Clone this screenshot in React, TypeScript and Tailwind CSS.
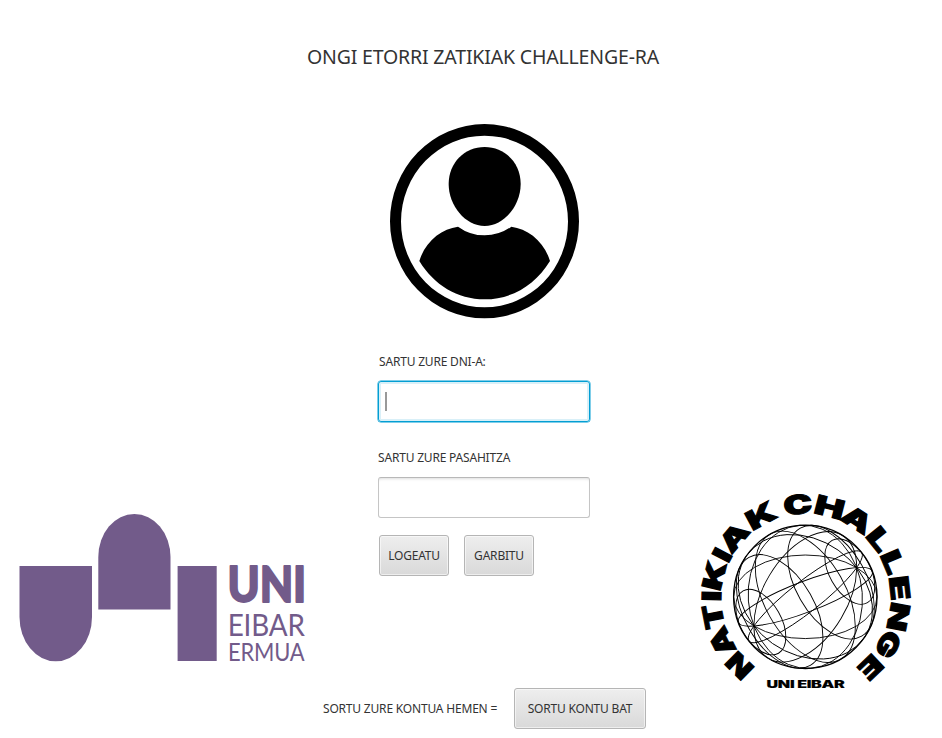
import React from "react";

const deg = (a: number) => (a * Math.PI) / 180;

const FONT = "font-['Noto_Sans','Open_Sans',sans-serif]";

/** Orthographic wireframe sphere: meridians and parallels every 30 degrees. */
function Globe({ cx, cy, r }: { cx: number; cy: number; r: number }) {
  const tilt = 0.824;
  const depth = Math.sqrt(1 - tilt * tilt);
  const axis = -29.6;
  const dx = Math.cos(deg(axis));
  const dy = Math.sin(deg(axis));
  const parallels = [30, 60, 90, 120, 150];
  const meridians = [-75, -45, -15, 15, 45, 75];
  return (
    <g fill="none" stroke="#000" strokeWidth="0.9">
      <circle cx={cx} cy={cy} r={r} strokeWidth="1.3" />
      {parallels.map((t) => {
        const c = Math.cos(deg(t)) * tilt * r;
        const s = Math.sin(deg(t)) * r;
        return (
          <ellipse
            key={t}
            rx={s * depth}
            ry={s}
            transform={`translate(${cx + c * dx} ${cy + c * dy}) rotate(${axis})`}
          />
        );
      })}
      {meridians.map((m) => {
        const along = -depth * Math.sin(deg(m));
        const across = Math.cos(deg(m));
        const nz = Math.abs(tilt * Math.sin(deg(m)));
        const angle = (Math.atan2(across, along) * 180) / Math.PI + axis + 90;
        return (
          <ellipse
            key={m}
            rx={r}
            ry={r * nz}
            transform={`translate(${cx} ${cy}) rotate(${angle})`}
          />
        );
      })}
    </g>
  );
}

/** Letter, angle on the ring, horizontal stretch. */
const RING: [string, number, number][] = [
  ["N", -135.4, 1.25],
  ["A", -117, 1.35],
  ["T", -101, 1.35],
  ["I", -88.5, 1.35],
  ["K", -76, 1.45],
  ["I", -62.5, 1.35],
  ["A", -49.5, 1.45],
  ["K", -28.5, 1.5],
  ["C", -5, 1.45],
  ["H", 14.5, 1.5],
  ["A", 33, 1.45],
  ["L", 51, 1.55],
  ["L", 67, 1.55],
  ["E", 83.5, 1.5],
  ["N", 101, 1.4],
  ["G", 119, 1.35],
  ["E", 136.5, 1.4],
];

function ChallengeLogo() {
  return (
    <svg width="230" height="210" viewBox="0 0 230 210" className="block overflow-visible">
      <Globe cx={115.3} cy={111.8} r={71.7} />
      <g
        fontSize="26.5"
        fontWeight="900"
        textAnchor="middle"
        stroke="#000"
        strokeWidth="1"
        className="font-['Inter',sans-serif]"
      >
        {RING.map(([ch, a, sx], i) => (
          <text key={i} transform={`translate(115.8 113.6) rotate(${a}) translate(0 -84.8) scale(${sx} 1)`}>
            {ch}
          </text>
        ))}
      </g>
      <text
        x="76.5"
        y="203"
        fontSize="10"
        fontWeight="900"
        textLength="78"
        lengthAdjust="spacingAndGlyphs"
        stroke="#000"
        strokeWidth="0.1"
        className="font-['Inter',sans-serif]"
      >
        UNI EIBAR
      </text>
    </svg>
  );
}

function UniLogo() {
  return (
    <svg width="307" height="180" viewBox="0 0 307 180" fill="#725b8a" className="block overflow-visible">
      <path d="M19.5 66H92V117A36.2 44.3 0 0 1 19.5 117Z" />
      <path d="M98.3 109.5V57A36.1 43 0 0 1 170.5 57V109.5Z" />
      <path d="M177.6 66H216.7V161H177.6Z" />
      <g className="font-['Lato',sans-serif]">
        <text
          x="227.5"
          y="101.6"
          fontSize="48.5"
          fontWeight="900"
          textLength="78.5"
          lengthAdjust="spacingAndGlyphs"
          stroke="#725b8a"
          strokeWidth="1.8"
          strokeLinejoin="round"
        >
          UNI
        </text>
        <text x="227.7" y="136.4" fontSize="31.5" textLength="77" lengthAdjust="spacingAndGlyphs">
          EIBAR
        </text>
        <text x="228" y="161" fontSize="25" textLength="76.5" lengthAdjust="spacingAndGlyphs">
          ERMUA
        </text>
      </g>
    </svg>
  );
}

function Avatar() {
  return (
    <svg width="210" height="210" viewBox="0 0 630 630" className="block">
      <path
        fillRule="evenodd"
        d="M30 318.5A283.5 291.5 0 0 1 597 318.5A283.5 291.5 0 0 1 30 318.5ZM63 319.5A250.5 257.5 0 0 0 564 319.5A250.5 257.5 0 0 0 63 319.5Z"
      />
      <path d="M314 96C374 96 422 143 422 207C422 272 372 333 314 333C256 333 206 272 206 207C206 143 254 96 314 96Z" />
      <path d="M234 335Q270 361 314 361Q358 361 394 335C444 342 492 378 510 438C466 510 396 553 314 553C232 553 162 510 118 438C136 378 184 342 234 335Z" />
    </svg>
  );
}

function Button({ children, className }: { children: React.ReactNode; className: string }) {
  return (
    <button
      className={`h-[41px] rounded-[3px] border border-[#b5b5b5] bg-linear-to-b from-[#eeeeee] to-[#d9d9d9] text-center tracking-[-0.2px] whitespace-nowrap shadow-[inset_0_0_0_1px_rgba(255,255,255,0.55)] ${className}`}
    >
      {children}
    </button>
  );
}

export default function App() {
  return (
    <div
      className={`flex h-[738px] w-[942px] overflow-hidden bg-white text-[12px] leading-4 tracking-[-0.19px] text-[#333333] ${FONT}`}
    >
      <aside className="w-[307px] shrink-0 pt-[500px]">
        <UniLogo />
      </aside>
      <main className="flex w-[383px] shrink-0 flex-col">
        <h1 className="mt-[43px] h-7 text-[19.5px] leading-7 font-normal tracking-[-0.17px] whitespace-nowrap">
          ONGI ETORRI ZATIKIAK CHALLENGE-RA
        </h1>
        <div className="mt-[44px] ml-[73px]">
          <Avatar />
        </div>
        <form className="mt-[29px] ml-[71px] flex w-[212px] flex-col" onSubmit={(e) => e.preventDefault()}>
          <label className="ml-px h-4 whitespace-nowrap">SARTU ZURE DNI-A:</label>
          <div className="mt-[11px] flex h-[41px] items-center rounded-[3px] border border-[#039ed3] pl-1.5 shadow-[inset_0_0_0_2px_#d9f0f8,0_0_0_0.5px_#039ed3]">
            <span className="h-[19px] w-[1.5px] bg-[#999999]" />
          </div>
          <label className="mt-7 h-4 whitespace-nowrap">SARTU ZURE PASAHITZA</label>
          <div className="mt-[11px] h-[41px] rounded-[3px] border border-[#c5c5c5] border-t-[#b8b8b8] shadow-[inset_0_3px_3px_-2px_#dddddd]" />
          <div className="mt-[17px] ml-px flex gap-[15px]">
            <Button className="w-[70px]">LOGEATU</Button>
            <Button className="w-[70px]">GARBITU</Button>
          </div>
        </form>
        <footer className="mt-[112px] ml-4 flex items-center">
          <span className="w-[191px] whitespace-nowrap">SORTU ZURE KONTUA HEMEN =</span>
          <Button className="w-[132px]">SORTU KONTU BAT</Button>
        </footer>
      </main>
      <aside className="pt-[485px]">
        <ChallengeLogo />
      </aside>
    </div>
  );
}
